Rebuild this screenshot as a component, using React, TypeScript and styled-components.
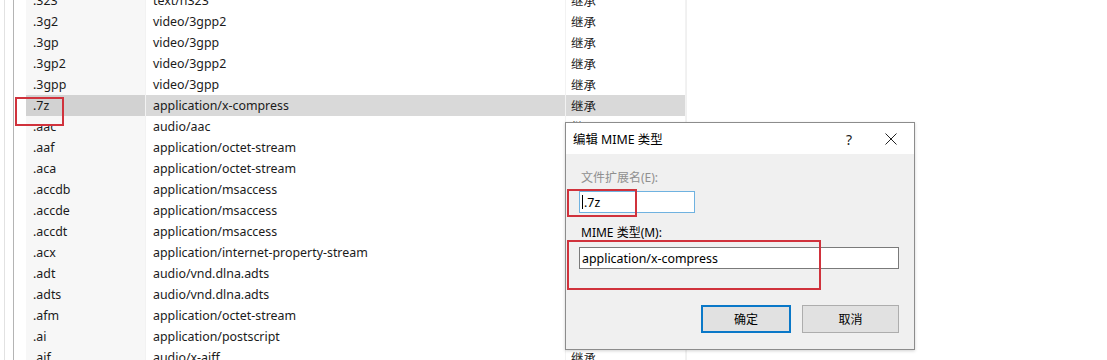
import React from 'react';
import styled, { createGlobalStyle } from 'styled-components';

const GlobalStyle = createGlobalStyle`
  html, body {
    margin: 0;
    padding: 0;
    background: #ffffff;
  }
  body {
    font-family: "Noto Sans", "Noto Sans CJK SC", sans-serif;
    font-size: 12px;
    color: #1b1b1b;
    overflow: hidden;
  }
`;

const Page = styled.div`
  position: relative;
  width: 1107px;
  height: 360px;
  overflow: hidden;
  display: flex;
  align-items: flex-start;
`;

const Gutter = styled.div`
  flex: none;
  align-self: stretch;
  width: 8px;
  margin-left: 4px;
  margin-right: 12px;
  border-left: 1px solid #e2e2e2;
  border-right: 1px solid #b4b4b4;
`;

const List = styled.div`
  flex: none;
  width: 660px;
  margin-top: -10px;
  border-right: 1px solid #f0f0f0;
`;

const Row = styled.div<{ $selected?: boolean }>`
  display: grid;
  grid-template-columns: 120px 420px 120px;
  height: 21px;
  font-size: 12.4px;
  background: ${p => (p.$selected ? '#d9d9d9' : 'transparent')};
`;

const Cell = styled.div<{ $sorted?: boolean; $pad?: number }>`
  display: flex;
  align-items: center;
  padding-left: ${p => p.$pad ?? 7}px;
  white-space: nowrap;
  overflow: hidden;
  background: ${p => (p.$sorted ? 'rgba(0, 0, 0, 0.03)' : 'transparent')};
  border-right: 1px solid #f2f2f2;
`;

const Dialog = styled.div`
  position: absolute;
  left: 565px;
  top: 122px;
  width: 348px;
  height: 226px;
  border: 1px solid #8c8c8c;
  background: #f0f0f0;
  box-shadow: 0 1px 3px rgba(0, 0, 0, 0.18);
  display: flex;
  flex-direction: column;
`;

const TitleBar = styled.div`
  height: 31px;
  background: #ffffff;
  display: flex;
  align-items: center;
  padding-left: 7px;
  padding-top: 1px;
  box-sizing: border-box;
`;

const Title = styled.div`
  flex: 1;
  font-size: 12.4px;
  color: #000;
`;

const TitleButton = styled.div<{ $w: number; $after: number }>`
  width: ${p => p.$w}px;
  margin-right: ${p => p.$after}px;
  display: flex;
  justify-content: center;
  align-items: center;
  color: #222;
  font-size: 14px;
`;

const Body = styled.div`
  flex: 1;
  display: flex;
  flex-direction: column;
  padding: 16px 15px 0 13px;
`;

const Label = styled.div<{ $disabled?: boolean; $gap: number }>`
  height: 16px;
  line-height: 16px;
  padding-left: 2px;
  margin-bottom: ${p => p.$gap}px;
  color: ${p => (p.$disabled ? '#8f8f8f' : '#000')};
`;

const Field = styled.div<{ $w: number; $focus?: boolean }>`
  width: ${p => p.$w}px;
  height: 22px;
  box-sizing: border-box;
  border: 1px solid ${p => (p.$focus ? '#6fb2e0' : '#7a7a7a')};
  background: #ffffff;
  display: flex;
  align-items: center;
  padding-left: 2px;
  color: #000;
  font-size: 12.4px;
  margin-bottom: 12px;
`;

const Caret = styled.span`
  display: inline-block;
  width: 1px;
  height: 14px;
  background: #000;
  margin-right: 1px;
`;

const Buttons = styled.div`
  margin-top: 24px;
  display: flex;
  justify-content: flex-end;
  gap: 11px;
`;

const Button = styled.div<{ $w: number; $primary?: boolean }>`
  width: ${p => p.$w}px;
  height: 28px;
  box-sizing: border-box;
  background: #e1e1e1;
  border: ${p => (p.$primary ? '2px solid #0a78c8' : '1px solid #adadad')};
  display: flex;
  align-items: center;
  justify-content: center;
  color: #000;
`;

const Mark = styled.div<{ $x: number; $y: number; $w: number; $h: number }>`
  position: absolute;
  left: ${p => p.$x}px;
  top: ${p => p.$y}px;
  width: ${p => p.$w}px;
  height: ${p => p.$h}px;
  box-sizing: border-box;
  border: 2px solid #d0323c;
  pointer-events: none;
`;

const rows: [string, string][] = [
  ['.323', 'text/h323'],
  ['.3g2', 'video/3gpp2'],
  ['.3gp', 'video/3gpp'],
  ['.3gp2', 'video/3gpp2'],
  ['.3gpp', 'video/3gpp'],
  ['.7z', 'application/x-compress'],
  ['.aac', 'audio/aac'],
  ['.aaf', 'application/octet-stream'],
  ['.aca', 'application/octet-stream'],
  ['.accdb', 'application/msaccess'],
  ['.accde', 'application/msaccess'],
  ['.accdt', 'application/msaccess'],
  ['.acx', 'application/internet-property-stream'],
  ['.adt', 'audio/vnd.dlna.adts'],
  ['.adts', 'audio/vnd.dlna.adts'],
  ['.afm', 'application/octet-stream'],
  ['.ai', 'application/postscript'],
  ['.aif', 'audio/x-aiff']
];

export default () => {
  return (
    <Page>
      <GlobalStyle />
      <Gutter />
      <List>
        {rows.map(([ext, mime]) => (
          <Row key={ext} $selected={ext === '.7z'}>
            <Cell $sorted>{ext}</Cell>
            <Cell>{mime}</Cell>
            <Cell $pad={5}>继承</Cell>
          </Row>
        ))}
      </List>

      <Dialog>
        <TitleBar>
          <Title>编辑 MIME 类型</Title>
          <TitleButton $w={40} $after={10}>?</TitleButton>
          <TitleButton $w={24} $after={11}>
            <svg width="12" height="12" viewBox="0 0 12 12">
              <path d="M0.5 0.5 L11.5 11.5 M11.5 0.5 L0.5 11.5" stroke="#222" strokeWidth="1" />
            </svg>
          </TitleButton>
        </TitleBar>
        <Body>
          <Label $disabled $gap={5}>文件扩展名(E):</Label>
          <Field $w={116} $focus>
            <Caret />.7z
          </Field>
          <Label $gap={6}>MIME 类型(M):</Label>
          <Field $w={320}>application/x-compress</Field>
          <Buttons>
            <Button $w={90} $primary>确定</Button>
            <Button $w={97}>取消</Button>
          </Buttons>
        </Body>
      </Dialog>

      <Mark $x={15} $y={97} $w={49} $h={29} />
      <Mark $x={567} $y={189} $w={70} $h={28} />
      <Mark $x={567} $y={240} $w={254} $h={50} />
    </Page>
  );
};
